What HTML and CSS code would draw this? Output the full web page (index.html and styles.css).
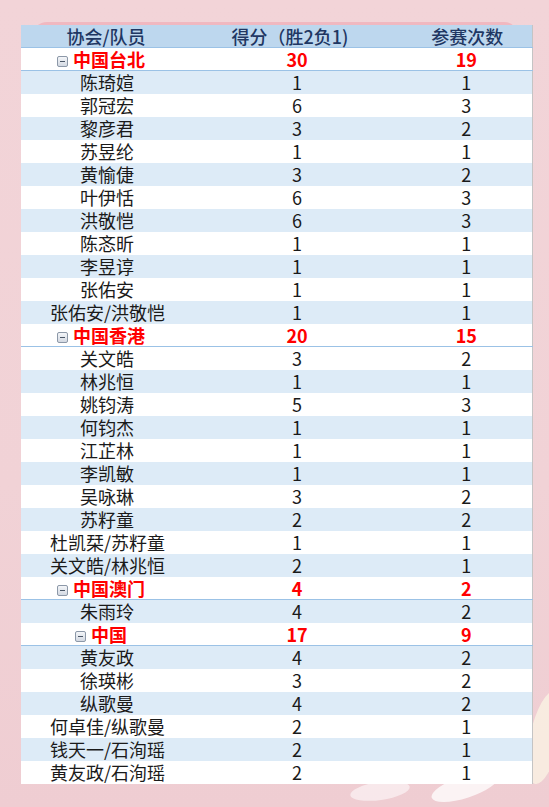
FILE: index.html
```html
<!DOCTYPE html>
<html lang="zh">
<head>
<meta charset="utf-8">
<link rel="stylesheet" href="styles.css">
</head>
<body>
<div class="page">
  <div class="deco deco-petal1"></div>
  <div class="deco deco-petal2"></div>
  <div class="deco deco-petal3"></div>
  <div class="frame">
    <table class="stats">
      <colgroup><col class="c1"><col class="c2"><col class="c3"></colgroup>
      <thead>
        <tr><th>协会/队员</th><th>得分（胜2负1)</th><th>参赛次数</th></tr>
      </thead>
      <tbody>
        <tr class="grp"><td class="name lv0"><span class="mn"></span>中国台北</td><td>30</td><td>19</td></tr>
        <tr class="b"><td class="name pl">陈琦媗</td><td>1</td><td>1</td></tr>
        <tr><td class="name pl">郭冠宏</td><td>6</td><td>3</td></tr>
        <tr class="b"><td class="name pl">黎彦君</td><td>3</td><td>2</td></tr>
        <tr><td class="name pl">苏昱纶</td><td>1</td><td>1</td></tr>
        <tr class="b"><td class="name pl">黄愉倢</td><td>3</td><td>2</td></tr>
        <tr><td class="name pl">叶伊恬</td><td>6</td><td>3</td></tr>
        <tr class="b"><td class="name pl">洪敬恺</td><td>6</td><td>3</td></tr>
        <tr><td class="name pl">陈忞昕</td><td>1</td><td>1</td></tr>
        <tr class="b"><td class="name pl">李昱谆</td><td>1</td><td>1</td></tr>
        <tr><td class="name pl">张佑安</td><td>1</td><td>1</td></tr>
        <tr class="b"><td class="name pr">张佑安/洪敬恺</td><td>1</td><td>1</td></tr>
        <tr class="grp"><td class="name lv0"><span class="mn"></span>中国香港</td><td>20</td><td>15</td></tr>
        <tr><td class="name pl">关文皓</td><td>3</td><td>2</td></tr>
        <tr class="b"><td class="name pl">林兆恒</td><td>1</td><td>1</td></tr>
        <tr><td class="name pl">姚钧涛</td><td>5</td><td>3</td></tr>
        <tr class="b"><td class="name pl">何钧杰</td><td>1</td><td>1</td></tr>
        <tr><td class="name pl">江芷林</td><td>1</td><td>1</td></tr>
        <tr class="b"><td class="name pl">李凯敏</td><td>1</td><td>1</td></tr>
        <tr><td class="name pl">吴咏琳</td><td>3</td><td>2</td></tr>
        <tr class="b"><td class="name pl">苏籽童</td><td>2</td><td>2</td></tr>
        <tr><td class="name pr">杜凯栞/苏籽童</td><td>1</td><td>1</td></tr>
        <tr class="b"><td class="name pr">关文皓/林兆恒</td><td>2</td><td>1</td></tr>
        <tr class="grp"><td class="name lv0"><span class="mn"></span>中国澳门</td><td>4</td><td>2</td></tr>
        <tr class="b"><td class="name pl">朱雨玲</td><td>4</td><td>2</td></tr>
        <tr class="grp"><td class="name lv1"><span class="mn"></span>中国</td><td>17</td><td>9</td></tr>
        <tr class="b"><td class="name pl">黄友政</td><td>4</td><td>2</td></tr>
        <tr><td class="name pl">徐瑛彬</td><td>3</td><td>2</td></tr>
        <tr class="b"><td class="name pl">纵歌曼</td><td>4</td><td>2</td></tr>
        <tr><td class="name pr">何卓佳/纵歌曼</td><td>2</td><td>1</td></tr>
        <tr class="b"><td class="name pr">钱天一/石洵瑶</td><td>2</td><td>1</td></tr>
        <tr><td class="name pr">黄友政/石洵瑶</td><td>2</td><td>1</td></tr>
      </tbody>
    </table>
  </div>
</div>
</body>
</html>
```

FILE: styles.css
```css
html, body {
  margin: 0;
  padding: 0;
}
body {
  width: 549px;
  height: 807px;
  overflow: hidden;
  background: linear-gradient(180deg, #f2d4d8 0%, #f1d2d6 60%, #efcdd2 100%);
  font-family: "Noto Sans CJK SC", "Noto Sans", sans-serif;
}
.page {
  position: relative;
  width: 549px;
  height: 807px;
  padding-top: 25px;
  box-sizing: border-box;
}
.frame {
  position: relative;
  margin-left: 21px;
  width: 511px;
}
.frame::before {
  content: "";
  position: absolute;
  left: 12px;
  right: 14px;
  top: -3px;
  height: 40px;
  border-radius: 14px;
  background: #f0b8c0;
  z-index: 0;
}
.stats {
  position: relative;
  z-index: 1;
  border-collapse: collapse;
  table-layout: fixed;
  width: 511px;
  background: #ffffff;
  border-right: 1px solid #c4c4c4;
  font-size: 18px;
  color: #1a1a1a;
}
.c1 { width: 170px; }
.c2 { width: 212px; }
.c3 { width: 129px; }
.stats th {
  height: 22px;
  padding: 0;
  line-height: 22px;
  background: #bdd7ee;
  color: #1f3763;
  font-weight: 500;
  text-align: center;
  border-bottom: 1px solid #9bc2e6;
}
.stats th:nth-child(2) { padding-right: 14px; }
.stats td {
  height: 23px;
  padding: 0;
  line-height: 23px;
  text-align: center;
  white-space: nowrap;
}
.stats td:nth-child(3) { padding-right: 2px; }
.stats td.name {
  text-align: left;
}
.stats tr.b td { background: #ddebf7; }
.stats tr.grp td {
  color: #ff0000;
  font-weight: 700;
  border-bottom: 1px solid #9bc2e6;
  height: 22px;
  line-height: 22px;
}
.pl { padding-left: 59px !important; }
.pr { padding-left: 29px !important; }
.lv0 { padding-left: 36px !important; }
.lv1 { padding-left: 54px !important; }
.mn {
  display: inline-block;
  position: relative;
  width: 9px;
  height: 9px;
  margin-right: 5px;
  vertical-align: 0px;
  border: 1px solid #8c98a8;
  border-radius: 2px;
  background: linear-gradient(180deg, #f4f6f9, #d3d9e2);
}
.mn::after {
  content: "";
  position: absolute;
  left: 2px;
  right: 2px;
  top: 4px;
  height: 1px;
  background: #4a5666;
}
.deco {
  position: absolute;
  z-index: 0;
  border-radius: 50%;
}
.deco-petal1 {
  left: 350px;
  top: 782px;
  width: 60px;
  height: 18px;
  background: rgba(255, 255, 255, 0.55);
  transform: rotate(-8deg);
}
.deco-petal2 {
  left: 430px;
  top: 776px;
  width: 70px;
  height: 22px;
  background: rgba(255, 255, 255, 0.75);
  transform: rotate(-18deg);
}
.deco-petal3 {
  left: 530px;
  top: 690px;
  width: 30px;
  height: 95px;
  background: rgba(248, 238, 225, 0.9);
  transform: rotate(12deg);
}
```
